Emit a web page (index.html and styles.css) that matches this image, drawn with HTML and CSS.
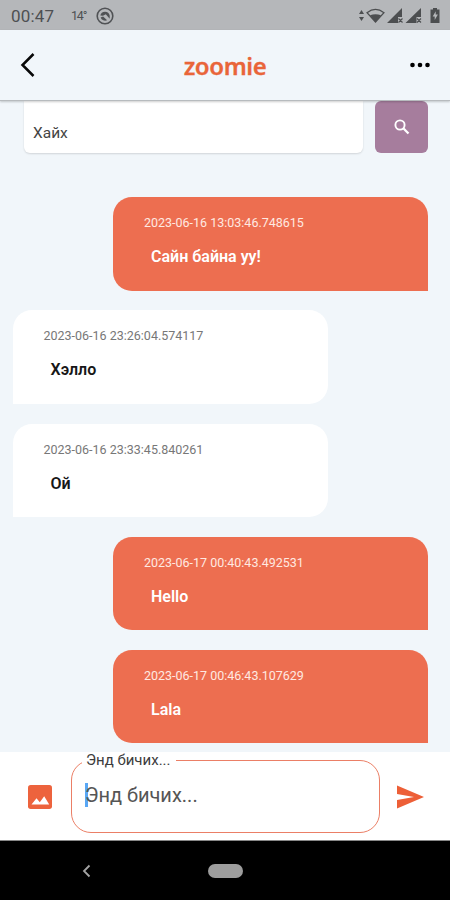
FILE: index.html
```
<!DOCTYPE html>
<html lang="mn">
<head>
<meta charset="utf-8">
<title>zoomie</title>
<link rel="stylesheet" href="styles.css">
</head>
<body>
<div class="phone">
  <div class="status">
    <span class="clock">00:47</span>
    <span class="temp">14°</span>
    <svg class="app-ring" width="18" height="18" viewBox="0 0 18 18"><circle cx="9" cy="9" r="7.8" fill="none" stroke="#505255" stroke-width="1.6"/><path d="M4.300 8.500A4.800 4.800 0 0 1 13.700 8.500v3.300L9.800 7.300 7 8.800zM4.600 10.500l2.500-.9 4 3.600A4.800 4.800 0 0 1 4.600 10.500z" fill="#505255"/></svg>
    <svg class="signals" width="82" height="18" viewBox="0 0 82 18" fill="#4c4e50">
      <path d="M0 7l2.500-4L5 7zM0 10h5l-2.500 4z"/>
      <path d="M8 5.700Q16.500-.800 25 5.700L16.500 15z" fill="none" stroke="#4c4e50" stroke-width="1.300"/>
      <path d="M11 8.300q5.500-2 11 0l-5.500 7z"/>
      <path d="M28 16L43 1v9h-4v6zM46.500 16L62 1v9h-4.500v6z"/>
      <path d="M39.500 11.500l4 4m0-4l-4 4M58 11.500l4 4m0-4l-4 4" stroke="#4c4e50" stroke-width="1.100"/>
      <path d="M71.500 2.500h2.500V1h4v1.500h2.500V16h-9z"/>
      <path d="M76.700 4.300l-3 5.200h2V13l3.200-5.500h-2.200z" fill="#b5b7ba"/>
    </svg>
  </div>
  <header class="bar">
    <svg class="back" width="16" height="26" viewBox="0 0 16 26"><path d="M13.500 2L2.500 13l11 11" fill="none" stroke="#080808" stroke-width="2.500"/></svg>
    <h1>zoomie</h1>
    <svg class="more" width="20" height="6" viewBox="0 0 20 6"><circle cx="2.500" cy="3" r="2.300"/><circle cx="10" cy="3" r="2.300"/><circle cx="17.500" cy="3" r="2.300"/></svg>
  </header>
  <main class="chat">
    <div class="search">
      <div class="search-field">Хайх</div>
      <button class="search-button" aria-label="Хайх"><svg width="16" height="16" viewBox="0 0 16 16" fill="none" stroke="#fff"><circle cx="6" cy="6" r="4.600" stroke-width="1.900"/><path d="M9.300 9.300l5.200 5.200" stroke-width="2.300"/></svg></button>
    </div>
    <div class="messages">
      <article class="bubble sent"><time>2023-06-16 13:03:46.748615</time><p>Сайн байна уу!</p></article>
      <article class="bubble received"><time>2023-06-16 23:26:04.574117</time><p>Хэлло</p></article>
      <article class="bubble received"><time>2023-06-16 23:33:45.840261</time><p>Ой</p></article>
      <article class="bubble sent"><time>2023-06-17 00:40:43.492531</time><p>Hello</p></article>
      <article class="bubble sent"><time>2023-06-17 00:46:43.107629</time><p>Lala</p></article>
    </div>
  </main>
  <footer class="composer">
    <svg class="image-icon" width="24" height="24" viewBox="0 0 24 24"><rect width="24" height="24" rx="2.700" fill="#ed633d"/><path d="M3.500 19.500l5-6.300 3.300 4 4.400-6 5 8.300z" fill="#fff"/></svg>
    <fieldset class="input"><legend>Энд бичих...</legend><div class="entry"><i class="caret"></i><span>Энд бичих...</span></div></fieldset>
    <svg class="send" width="27" height="24" viewBox="0 0 27 24" fill="#ed5f37"><path d="M0 .5l27 11.500L0 23.500v-8.500l17-3L0 9z"/></svg>
  </footer>
  <nav class="system-nav">
    <svg class="nav-back" width="9" height="14" viewBox="0 0 9 14"><path d="M7.500 1.500L2 7l5.500 5.500" fill="none" stroke="#a4a4a4" stroke-width="1.800"/></svg>
    <span class="home"></span>
  </nav>
</div>
</body>
</html>
```
FILE: styles.css
```
* { box-sizing: border-box; }
body { margin: 0; font-family: Roboto, "Noto Sans", sans-serif; }
.phone { width: 450px; height: 900px; display: flex; flex-direction: column; overflow: hidden; background: #f1f6fa; }
.status { height: 30px; flex: none; display: flex; align-items: center; padding: 1px 9px 0 11px; background: #b5b7ba; color: #4e5053; }
.clock { width: 60px; font-size: 17px; letter-spacing: .2px; }
.temp { width: 25px; font-size: 12.5px; letter-spacing: -1.2px; }
.signals { margin-left: auto; }
.bar { height: 71px; flex: none; display: flex; align-items: center; justify-content: space-between; padding: 0 20px; background: #f1f6fa; border-bottom: 1px solid #b7bbbe; box-shadow: 0 1px 2px #0003; z-index: 1; }
.back { margin-right: 4px; }
.bar h1 { margin: 2px 0 0; font: 600 24px/32px "Noto Sans", sans-serif; letter-spacing: -.4px; color: #e96539; -webkit-text-stroke: .3px #e96539; }
.chat { height: 651px; flex: none; overflow: hidden; }
.search { display: flex; gap: 12px; height: 52px; padding: 0 22px 0 24px; }
.search-field { width: 339px; padding: 22px 9px 0; background: #fff; border-radius: 0 0 6px 6px; box-shadow: 0 1px 2px #0002; font-size: 15.5px; line-height: 20px; color: #444; }
.search-button { width: 53px; height: 52px; padding: 0; border: 0; border-radius: 6px; background: #a67d9d; display: flex; align-items: center; justify-content: center; }
.messages { display: flex; flex-direction: column; gap: 19.6px; padding: 44.4px 22px 0 12.5px; }
.bubble { width: 315px; height: 93.5px; flex: none; padding: 18px 31px 0; }
.bubble time { display: block; font-size: 12.5px; line-height: 16px; white-space: nowrap; }
.bubble p { margin: 17px 0 0 7px; font-size: 16px; line-height: 18px; font-weight: 600; }
.sent { align-self: flex-end; background: #ed6e50; color: #fff; border-radius: 19px 19px 0 19px; }
.sent time { color: #ffe9e1; }
.received { background: #fff; color: #171717; border-radius: 19px 19px 19px 0; }
.received time { color: #777; }
.composer { height: 89px; flex: none; display: flex; align-items: center; padding: 0 26px 0 28px; background: #fff; border-bottom: 1px solid #888; }
.image-icon { margin-right: 19px; margin-top: 1px; }
.input { width: 309px; height: 81px; margin: 0 17px 7px 0; padding: 0 0 0 13px; border: 1.5px solid #eb7f66; border-radius: 20px; min-width: 0; }
.input legend { margin-left: -3px; padding: 0 5px 0 4px; font-size: 15px; line-height: 16px; color: #3c3c3c; white-space: nowrap; }
.entry { display: flex; align-items: center; height: 24px; margin-top: 15px; font-size: 20px; color: #555; }
.caret { width: 3px; height: 24px; margin-right: -3px; background: #59a7f5; }
.send { flex: none; margin-top: 1px; }
.system-nav { height: 59px; flex: none; display: flex; align-items: center; padding-left: 82px; background: #000; }
.home { width: 35px; height: 14px; margin-left: 117px; border-radius: 7px; background: #9d9d9d; }
```
